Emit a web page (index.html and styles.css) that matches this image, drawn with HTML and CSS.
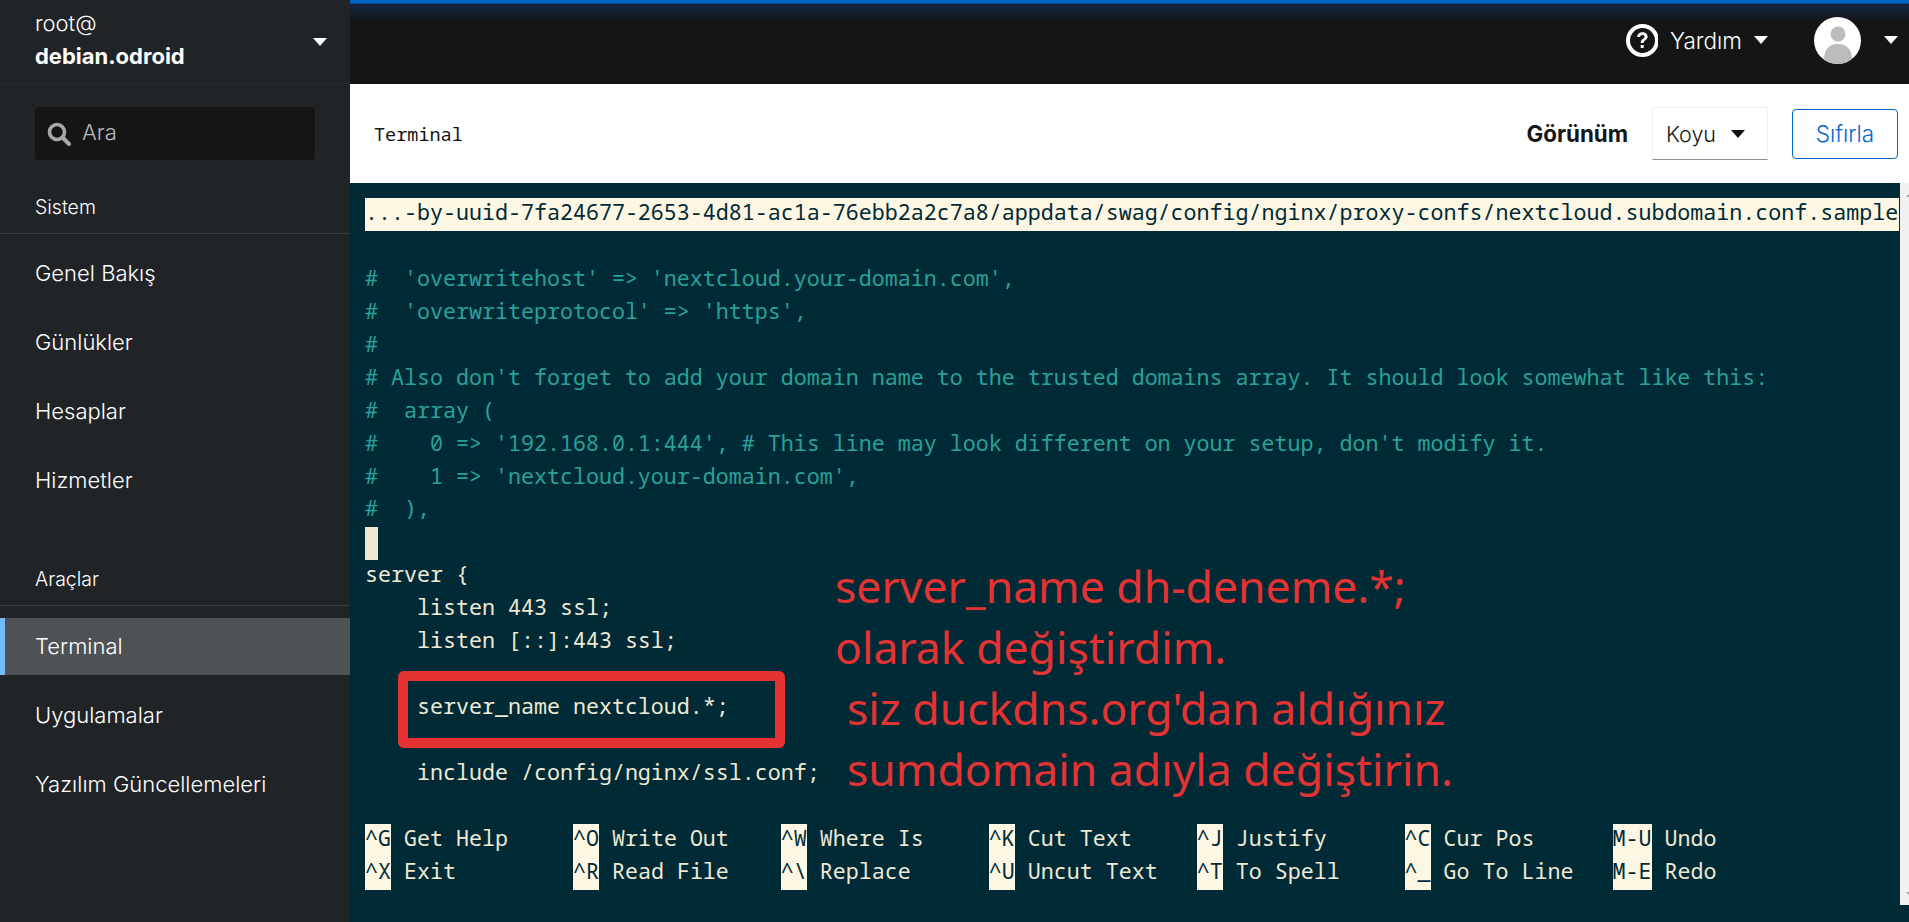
FILE: index.html
```html
<!DOCTYPE html>
<html lang="tr">
<head>
<meta charset="utf-8">
<title>Terminal</title>
<link rel="stylesheet" href="styles.css">
</head>
<body>
<aside class="sidebar">
  <div class="host">
    <div class="host-text">
      <div class="host-user">root@</div>
      <div class="host-name">debian.odroid</div>
    </div>
    <span class="caret caret-light"></span>
  </div>
  <div class="search">
    <svg class="search-icon" viewBox="0 0 24 24" width="24" height="24"><circle cx="10" cy="10" r="7.5" fill="none" stroke="#a9a9a9" stroke-width="3.6"/><path d="M15.5 15.5 22 22" stroke="#a9a9a9" stroke-width="4" stroke-linecap="round"/></svg>
    <span class="search-text">Ara</span>
  </div>
  <div class="nav-title nav-title-first">Sistem</div>
  <nav class="nav">
    <a class="nav-item">Genel Bakış</a>
    <a class="nav-item">Günlükler</a>
    <a class="nav-item">Hesaplar</a>
    <a class="nav-item">Hizmetler</a>
  </nav>
  <div class="nav-title nav-title-second">Araçlar</div>
  <nav class="nav">
    <a class="nav-item nav-item-active">Terminal</a>
    <a class="nav-item">Uygulamalar</a>
    <a class="nav-item">Yazılım Güncellemeleri</a>
  </nav>
</aside>
<main class="main">
  <header class="topbar">
    <div class="help">
      <svg class="help-icon" viewBox="0 0 32 33" width="32" height="33"><circle cx="16.5" cy="16.5" r="14.5" fill="none" stroke="#fff" stroke-width="4"/><path d="M11.2 13c0-3 2.2-4.8 5.2-4.8s5.2 1.7 5.2 4.3c0 3.6-4 3.6-4 6.6h-2.9c0-4.3 3.9-4.300 3.900-6.500 0-1-.9-1.700-2.200-1.700-1.400 0-2.300.8-2.300 2.100z" fill="#fff"/><rect x="14.700" y="21" width="3" height="3" fill="#fff"/></svg>
      <span class="help-text">Yardım</span>
      <span class="caret caret-light"></span>
    </div>
    <div class="avatar">
      <svg viewBox="0 0 47 47" width="47" height="47"><circle cx="23.500" cy="23.500" r="23.500" fill="#fff"/><circle cx="24" cy="17" r="7.500" fill="#bcbcbc"/><path d="M10 42c0-9 5-15 14-15s14 6 14 15c-4 3-9 5-14 5s-10-2-14-5z" fill="#bcbcbc"/></svg>
    </div>
    <span class="caret caret-light"></span>
  </header>
  <section class="toolbar">
    <h1 class="page-title">Terminal</h1>
    <div class="toolbar-actions">
      <span class="view-label">Görünüm</span>
      <div class="select"><span>Koyu</span><span class="caret caret-dark"></span></div>
      <button class="reset">Sıfırla</button>
    </div>
  </section>
  <section class="terminal">
    <div class="screen">
      <div class="line line-title">...-by-uuid-7fa24677-2653-4d81-ac1a-76ebb2a2c7a8/appdata/swag/config/nginx/proxy-confs/nextcloud.subdomain.conf.sample</div>
      <div class="line"></div>
      <div class="line line-comment">#  'overwritehost' =&gt; 'nextcloud.your-domain.com',</div>
      <div class="line line-comment">#  'overwriteprotocol' =&gt; 'https',</div>
      <div class="line line-comment">#</div>
      <div class="line line-comment"># Also don't forget to add your domain name to the trusted domains array. It should look somewhat like this:</div>
      <div class="line line-comment">#  array (</div>
      <div class="line line-comment">#    0 =&gt; '192.168.0.1:444', # This line may look different on your setup, don't modify it.</div>
      <div class="line line-comment">#    1 =&gt; 'nextcloud.your-domain.com',</div>
      <div class="line line-comment">#  ),</div>
      <div class="line"><span class="cursor"> </span></div>
      <div class="line">server {</div>
      <div class="line">    listen 443 ssl;</div>
      <div class="line">    listen [::]:443 ssl;</div>
      <div class="line"></div>
      <div class="line">    server_name nextcloud.*;</div>
      <div class="line"></div>
      <div class="line">    include /config/nginx/ssl.conf;</div>
      <div class="line"></div>
      <div class="line"><span class="key">^G</span> Get Help     <span class="key">^O</span> Write Out    <span class="key">^W</span> Where Is     <span class="key">^K</span> Cut Text     <span class="key">^J</span> Justify      <span class="key">^C</span> Cur Pos      <span class="key">M-U</span> Undo</div>
      <div class="line"><span class="key">^X</span> Exit         <span class="key">^R</span> Read File    <span class="key">^\</span> Replace      <span class="key">^U</span> Uncut Text   <span class="key">^T</span> To Spell     <span class="key">^_</span> Go To Line   <span class="key">M-E</span> Redo</div>
    </div>
    <div class="scrollbar"><span class="scroll-up"></span><span class="scroll-down"></span></div>
    <div class="mark-box"></div>
    <div class="note">
      <div class="note-line">server_name dh-deneme.*;</div>
      <div class="note-line">olarak değiştirdim.</div>
      <div class="note-line note-indent">siz duckdns.org'dan aldığınız</div>
      <div class="note-line note-indent">sumdomain adıyla değiştirin.</div>
    </div>
  </section>
</main>
</body>
</html>
```
FILE: styles.css
```css
* { box-sizing: border-box; }
html, body { margin: 0; height: 922px; overflow: hidden; }
body { display: flex; width: 1909px; font-family: "Inter", "Lato", sans-serif; background: #212427; }

.caret { display: inline-block; width: 0; height: 0; border-left: 7px solid transparent; border-right: 7px solid transparent; }
.caret-light { border-top: 8px solid #fff; }
.caret-dark { border-top: 8px solid #111; }

/* Sidebar */
.sidebar { width: 350px; flex: none; height: 922px; background: #212427; color: #fff; }
.host { height: 84px; padding: 0 23px 0 35px; display: flex; align-items: center; justify-content: space-between; border-bottom: 1px solid #2a2d30; }
.host-text { font-size: 22px; line-height: 33px; margin-top: -4px; }
.host-user { font-weight: 300; }
.host-name { font-weight: 700; }
.search { margin: 23px 35px 0; height: 53px; background: #151515; border-radius: 4px; display: flex; align-items: center; padding-left: 12px; gap: 11px; }
.search-text { color: #b8bbbe; font-size: 22px; font-weight: 300; line-height: 24px; margin-top: -3px; }
.nav-title { font-size: 19.500px; padding-left: 35px; height: 37px; border-bottom: 1px solid #3c3f42; line-height: 20px; font-weight: 300; }
.nav-title-first { margin-top: 37px; margin-bottom: 11px; }
.nav-title-second { margin-top: 60px; margin-bottom: 12px; }
.nav { display: flex; flex-direction: column; gap: 12px; }
.nav-item { height: 57px; line-height: 56px; padding-left: 35px; font-size: 22px; font-weight: 300; color: #fff; }
.nav-item-active { background: #4f5255; border-left: 5px solid #73bcf7; padding-left: 30px; }

/* Main */
.main { width: 1559px; flex: none; height: 922px; display: flex; flex-direction: column; }
.topbar { height: 84px; flex: none; background: linear-gradient(#06c 0, #06c 3px, #13263f 4px, #151515 22px); display: flex; align-items: center; justify-content: flex-end; padding: 0 11px 4px 0; color: #fff; }
.help { display: flex; align-items: center; margin-right: 46px; }
.help-text { font-size: 22.500px; font-weight: 300; margin: 0 12px; }
.avatar { width: 47px; height: 47px; margin-right: 23px; }
.avatar svg { display: block; }

.toolbar { height: 99px; flex: none; background: #fff; display: flex; align-items: center; justify-content: space-between; padding: 0 11px 0 24px; }
.page-title { margin: 0; font: 400 18.500px "Noto Sans Mono", "DejaVu Sans Mono", monospace; color: #151515; }
.toolbar-actions { display: flex; align-items: center; }
.view-label { font-weight: 700; font-size: 22.300px; color: #151515; margin-right: 24px; }
.select { width: 116px; height: 53px; border: 1px solid #f0f0f0; border-bottom-color: #8a8d90; display: flex; align-items: center; justify-content: space-between; padding: 0 22px 0 13px; font-size: 21.500px; font-weight: 300; color: #151515; margin-right: 24px; }
.reset { width: 106px; height: 50px; background: #fff; border: 1px solid #06c; border-radius: 4px; color: #06c; font: 300 22.500px "Inter", sans-serif; padding: 0; }

/* Terminal */
.terminal { position: relative; flex: 1; background: #002b36; display: flex; }
.screen { flex: 1; padding: 15px 0 0 15px; }
.line { height: 32.950px; line-height: 28px; white-space: pre; font-family: "Noto Sans Mono", "DejaVu Sans Mono", monospace; font-size: 21.670px; color: #eee8d5; }
.line-title { background: #fdf6e3; color: #002b36; width: 1534px; }
.line-comment { color: #2aa198; }
.cursor { display: inline-block; width: 13px; height: 33px; background: #eee8d5; vertical-align: top; }
.key { background: #fdf6e3; color: #002b36; display: inline-block; height: 33px; vertical-align: top; }
.scrollbar { width: 9px; height: 722px; flex: none; background: #f1f1f1; display: flex; flex-direction: column; justify-content: space-between; padding: 11px 0 10px 6px; }
.scroll-up { width: 0; height: 0; border-left: 3px solid transparent; border-right: 3px solid transparent; border-bottom: 3px solid #a3a3a3; }
.scroll-down { width: 0; height: 0; border-left: 3px solid transparent; border-right: 3px solid transparent; border-top: 3px solid #a3a3a3; }

.mark-box { position: absolute; left: 48px; top: 488px; width: 387px; height: 77px; border: 10px solid #e53333; border-radius: 6px; }
.note { position: absolute; left: 485px; top: 372px; color: #e53333; font-family: "Noto Sans", sans-serif; font-size: 44.500px; line-height: 61px; }
.note-line { white-space: pre; }
.note-indent { padding-left: 12px; }
```
